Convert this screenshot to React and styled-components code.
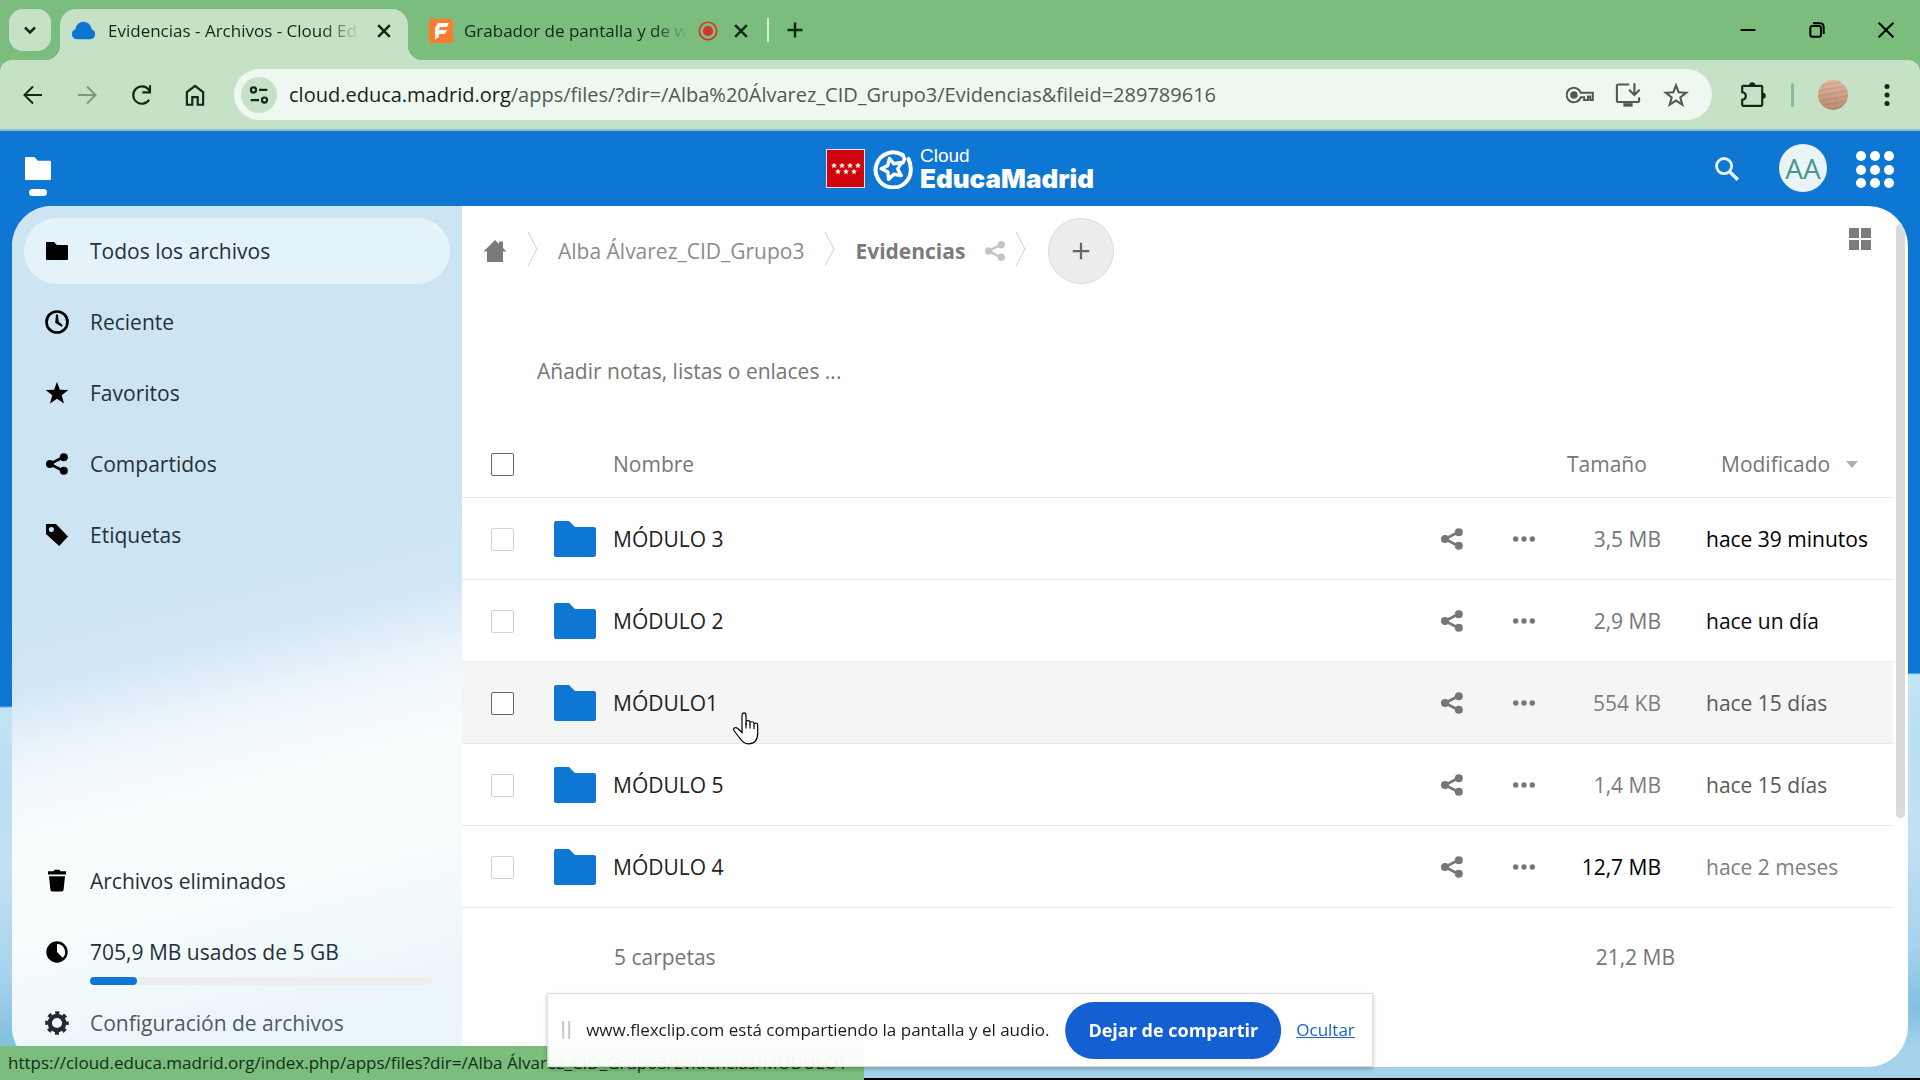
import React, { useState } from "react";
import styled, { createGlobalStyle, css } from "styled-components";

const GlobalStyle = createGlobalStyle`
  *, *::before, *::after {
    box-sizing: border-box;
  }

  body {
    margin: 0;
    color: #222;
    font-family: "Open Sans", "Noto Sans", sans-serif;
    font-size: 21px;
    line-height: 28px;
  }

  button {
    padding: 0;
    border: 0;
    background: none;
    color: inherit;
    font: inherit;
    cursor: pointer;
  }

  a {
    color: inherit;
    text-decoration: none;
  }

  svg {
    display: block;
    flex: none;
  }
`;

const Screen = styled.div`
  display: flex;
  flex-direction: column;
  min-height: 100vh;
  overflow: hidden;
`;

/* ---------- browser ---------- */

const TabStrip = styled.div`
  display: flex;
  align-items: flex-end;
  height: 60px;
  padding-left: 9px;
  background: #7abd7c;
  color: #12281a;
`;

const TabSearch = styled.button`
  display: grid;
  place-items: center;
  width: 42px;
  height: 42px;
  margin: 0 9px 9px 0;
  border-radius: 14px;
  background: #c5e2c6;
`;

const Tab = styled.div`
  position: relative;
  display: flex;
  align-items: center;
  gap: 12px;
  width: 348px;
  height: 51px;
  padding: 0 12px 8px 11px;
  border-radius: 16px 16px 0 0;

  ${(props) =>
    props.$active
      ? css`
          background: #c5e2c6;

          &::before,
          &::after {
            content: "";
            position: absolute;
            bottom: 0;
            width: 14px;
            height: 14px;
          }
          &::before {
            right: 100%;
            background: radial-gradient(circle at 0 0, transparent 14px, #c5e2c6 14px);
          }
          &::after {
            left: 100%;
            background: radial-gradient(circle at 100% 0, transparent 14px, #c5e2c6 14px);
          }
        `
      : css`
          gap: 11px;
          width: 345px;
          padding: 0 0 8px 21px;
        `}
`;

const TabTitle = styled.span`
  flex: 1;
  min-width: 0;
  overflow: hidden;
  white-space: nowrap;
  font-size: 17px;
  line-height: 24px;
  mask-image: linear-gradient(to right, #000 85%, transparent);
`;

const TabButton = styled.button`
  display: grid;
  place-items: center;
  width: 24px;
  height: 24px;
`;

const TabDivider = styled.span`
  width: 2px;
  height: 24px;
  margin: 0 14px 18px;
  background: #d3ecd2;
`;

const NewTab = styled(TabButton)`
  margin-bottom: 18px;
`;

const WindowControls = styled.div`
  display: flex;
  align-self: center;
  margin-left: auto;
`;

const WindowButton = styled.button`
  display: grid;
  place-items: center;
  width: 69px;
  height: 60px;
  color: #000;
`;

const Toolbar = styled.div`
  display: flex;
  align-items: center;
  height: 71px;
  padding: 0 30px 0 18px;
  border-bottom: 2px solid #8dc0cc;
  border-radius: 12px 12px 0 0;
  background: #c5e2c6;
  color: #12281a;
`;

const ToolbarWrap = styled.div`
  background: #7abd7c;
`;

const NavButton = styled.button`
  display: grid;
  place-items: center;
  width: 30px;
  height: 30px;
  margin-right: 24px;
  opacity: ${(props) => (props.disabled ? 0.4 : 1)};
`;

const AddressBar = styled.div`
  display: flex;
  flex: 1;
  align-items: center;
  height: 51px;
  min-width: 0;
  padding: 0 22px 0 7px;
  border-radius: 26px;
  background: #eef8f0;
  color: #4d5c52;
`;

const SiteInfo = styled.button`
  display: grid;
  flex: none;
  place-items: center;
  width: 36px;
  height: 36px;
  margin-right: 12px;
  border-radius: 50%;
  background: #c5e2c6;
  color: #12281a;
`;

const Url = styled.div`
  flex: 1;
  overflow: hidden;
  white-space: nowrap;
  font-size: 20px;

  b {
    color: #16241b;
    font-weight: 400;
  }
`;

const AddressActions = styled.div`
  display: flex;
  gap: 20px;
`;

const IconButton = styled.button`
  display: grid;
  place-items: center;
  width: 28px;
  height: 28px;
`;

const ToolbarEnd = styled.div`
  display: flex;
  align-items: center;
  margin-left: 27px;
`;

const ToolbarDivider = styled.span`
  width: 3px;
  height: 24px;
  margin: 0 24px;
  border-radius: 2px;
  background: #84c287;
`;

const ProfilePhoto = styled.button`
  width: 30px;
  height: 30px;
  margin-right: 36px;
  border-radius: 50%;
  background:
    repeating-linear-gradient(170deg, rgba(120, 70, 50, 0.15) 0 1px, transparent 2px 5px),
    linear-gradient(#e0b8a0, #b98a70);
`;

const LinkPreview = styled.div`
  position: fixed;
  bottom: 0;
  left: 0;
  width: 45vw;
  height: 34px;
  padding: 3px 8px;
  background: #7abd7c;
  color: #10301a;
  font-size: 17px;
  white-space: nowrap;
  overflow: hidden;
`;

const ShareNotice = styled.div`
  position: fixed;
  bottom: 13px;
  left: 50%;
  display: flex;
  align-items: center;
  height: 74px;
  padding: 0 17px 0 14px;
  border: 1px solid #dcdcdc;
  background: linear-gradient(#fff 60%, rgba(255, 255, 255, 0.94));
  box-shadow: 0 2px 4px rgba(0, 0, 0, 0.25);
  color: #1c1c1c;
  font-size: 17px;
  white-space: nowrap;
  transform: translateX(-50%);
`;

const Grip = styled.span`
  width: 8px;
  height: 18px;
  margin-right: 16px;
  border: solid #c8c8c8;
  border-width: 0 2px;
`;

const StopSharing = styled.button`
  height: 57px;
  margin: 0 15px 0 16px;
  padding: 0 23px;
  border-radius: 29px;
  background: #145fd1;
  color: #fff;
  font-size: 18px;
  font-weight: 700;
`;

const HideLink = styled.a`
  color: #1a62c6;
  text-decoration: underline;
`;

/* ---------- cloud app ---------- */

const Cloud = styled.div`
  display: flex;
  flex: 1;
  flex-direction: column;
  padding: 0 12px 11px;
  border-bottom: 2px solid #000;
  background:
    linear-gradient(
      179deg,
      transparent 0 575px,
      #c2e5f5 577px,
      #b9dff1 640px,
      #c3e0f4 740px,
      #a5d2ec 850px,
      #82c0e1 910px,
      #a4d3eb 950px
    ),
    #0e76d3;
`;

const Header = styled.header`
  display: grid;
  grid-template-columns: 1fr auto 1fr;
  align-items: center;
  height: 75px;
  color: #fff;
`;

const AppLink = styled.a`
  display: flex;
  flex-direction: column;
  align-items: center;
  gap: 9px;
  width: 26px;
  margin: 16px 0 0 13px;

  &::after {
    content: "";
    width: 18px;
    height: 7px;
    border-radius: 4px;
    background: #fff;
  }
`;

const Brand = styled.a`
  display: flex;
  align-items: center;
  gap: 6px;
`;

const BrandName = styled.span`
  display: flex;
  flex-direction: column;
  font-family: "Liberation Sans", Arial, sans-serif;
  font-size: 19px;
  line-height: 20px;

  strong {
    font-family: Inter, "Liberation Sans", sans-serif;
    font-size: 26px;
    font-weight: 900;
    line-height: 26px;
  }
`;

const HeaderEnd = styled.div`
  display: flex;
  align-items: center;
  justify-content: flex-end;
  padding-right: 14px;
`;

const Avatar = styled.button`
  width: 48px;
  height: 48px;
  margin: 0 29px 2px 38px;
  border-radius: 50%;
  background: #e9f4f8;
  color: #4b958d;
  font-size: 28px;
`;

const Panel = styled.div`
  position: relative;
  display: grid;
  flex: 1;
  grid-template-columns: 450px minmax(0, 1fr);
  overflow: hidden;
  border-radius: 40px;
  background: #fff;
`;

const Sidebar = styled.nav`
  display: flex;
  flex-direction: column;
  gap: 5px;
  padding: 12px 12px 11px;
  background: linear-gradient(
    166deg,
    #cde5f2 0,
    #cde5f3 400px,
    #d2e6f6 470px,
    #eef6fb 545px,
    #f8fcfd 620px,
    #f7fcfd 720px,
    #ecf6fa 840px,
    #e8f4f9 100%
  );
`;

const SideItem = styled.a`
  display: flex;
  align-items: center;
  gap: 21px;
  height: 66px;
  padding-left: 21px;
  border-radius: 33px;
  background: ${(props) => (props.$active ? "#e4f2fa" : "none")};
  color: ${(props) => (props.$muted ? "#4f595f" : "#25313a")};

  svg {
    color: ${(props) => (props.$muted ? "#222b30" : "#000")};
  }
`;

const SideSpacer = styled.div`
  flex: 1;
`;

const Quota = styled.div`
  position: relative;
`;

const QuotaBar = styled.div`
  position: absolute;
  right: 18px;
  bottom: 0;
  left: 66px;
  height: 8px;
  border-radius: 4px;
  background: #ededed;
`;

const QuotaFill = styled.div`
  height: 100%;
  border-radius: 4px;
  background: #0e76d3;
`;

const Files = styled.main`
  padding: 12px 15px 0 0;
  color: #767676;
`;

const Controls = styled.div`
  display: flex;
  align-items: center;
  height: 66px;
  padding: 0 19px 0 21px;
`;

const Crumb = styled.a`
  display: flex;
  align-items: center;
  gap: 19px;
  color: ${(props) => (props.$current ? "#7b7b7b" : "#8c8c8c")};
  font-weight: ${(props) => (props.$current ? 700 : 400)};
`;

const CrumbArrow = styled.svg`
  margin: 0 ${(props) => props.$after || 20}px 4px ${(props) => props.$before || 20}px;
`;

const AddButton = styled.button`
  display: grid;
  place-items: center;
  width: 66px;
  height: 66px;
  border: 1px solid #dbdbdb;
  border-radius: 50%;
  background: #ededed;
  color: #666;
`;

const GridToggle = styled(IconButton)`
  margin: 0 0 24px auto;
`;

const Notes = styled.p`
  margin: 73px 75px 45px;
`;

const FileTable = styled.table`
  width: 100%;
  border-collapse: collapse;
  table-layout: fixed;

  th,
  td {
    height: 82px;
    padding: 2px 0 0;
    border-bottom: 1px solid #e9e9e9;
    font-weight: 400;
    text-align: left;
  }
  th {
    height: 67px;
  }
  tfoot td {
    height: 98px;
    border: 0;
  }
`;

const FileRow = styled.tr`
  background: ${(props) => (props.$hovered ? "#f5f5f5" : "none")};
`;

const Checkbox = styled.input`
  display: block;
  width: 23px;
  height: 23px;
  margin: 0 0 0 29px;
  appearance: none;
  border: 1px solid ${(props) => (props.$strong ? "#666" : "#d2d2d2")};
  border-radius: 2px;
  background: #fff;
`;

const FileLink = styled.a`
  position: relative;
  display: flex;
  align-items: center;
  gap: 17px;
  width: fit-content;
  color: #222;
`;

const RowAction = styled.button`
  display: block;
  margin-left: 28px;
`;

const Pointer = styled.svg`
  position: absolute;
  top: 27px;
  left: 179px;
`;

const Size = styled.td`
  && {
    padding-right: ${(props) => (props.$total ? 0 : 14)}px;
    color: ${(props) => props.$tone || "#767676"};
    text-align: right;
  }
`;

const Modified = styled.td`
  && {
    padding-left: 31px;
    color: ${(props) => props.$tone};
    white-space: nowrap;
  }
`;

const SortButton = styled.button`
  display: flex;
  align-items: center;
  gap: 16px;
  margin-left: ${(props) => props.$indent}px;
`;

const ScrollThumb = styled.div`
  position: absolute;
  top: 18px;
  right: 3px;
  width: 9px;
  height: 69%;
  border-radius: 5px;
  background: #dadada;
`;

/* ---------- icons ---------- */

const Icon = ({ size = 24, children, ...rest }) => (
  <svg width={size} height={size} viewBox="0 0 24 24" fill="currentColor" aria-hidden="true" {...rest}>
    {children}
  </svg>
);

const Line = ({ width = 2, ...rest }) => (
  <Icon fill="none" stroke="currentColor" strokeWidth={width} {...rest} />
);

const CloseIcon = ({ size = 20 }) => (
  <Line size={size} width={3}>
    <path d="M5 5l14 14M19 5L5 19" />
  </Line>
);

const FolderIcon = ({ width = 22, height = 18, color = "currentColor" }) => (
  <svg width={width} height={height} viewBox="0 0 42 36" preserveAspectRatio="none" fill={color} aria-hidden="true">
    <path d="M2 0h13l6 6h19a2 2 0 0 1 2 2v26a2 2 0 0 1-2 2H2a2 2 0 0 1-2-2V2a2 2 0 0 1 2-2z" />
  </svg>
);

const ShareIcon = ({ size = 24, ...rest }) => (
  <Icon size={size} {...rest}>
    <path d="M18.5 5L5 12l13.500 7" fill="none" stroke="currentColor" strokeWidth="2.600" />
    <circle cx="18.800" cy="5.200" r="4" />
    <circle cx="5" cy="12" r="4" />
    <circle cx="18.800" cy="18.800" r="4" />
  </Icon>
);

const DotsIcon = () => (
  <Icon>
    <circle cx="3.700" cy="12" r="2.700" />
    <circle cx="12" cy="12" r="2.700" />
    <circle cx="20.300" cy="12" r="2.700" />
  </Icon>
);

const ClockIcon = () => (
  <Icon>
    <circle cx="12" cy="12" r="10.500" fill="none" stroke="currentColor" strokeWidth="2.700" />
    <path d="M11 4.500h2l.7 7 4 3.700-1.200 1.600-6.300-4z" />
  </Icon>
);

const StarIcon = () => (
  <Icon>
    <path d="M12 .8l2.900 7.900 8.400.3-6.600 5.200 2.300 8.200-7-4.700-7 4.700 2.300-8.200L.7 9l8.400-.3z" />
  </Icon>
);

const TagIcon = () => (
  <Icon>
    <path fillRule="evenodd" d="M1 1h10l12 12.500-8.800 9.500L1 11zM6.400 4a2.500 2.500 0 1 0 0 5 2.500 2.500 0 0 0 0-5z" />
  </Icon>
);

const TrashIcon = () => (
  <Icon>
    <path d="M9.500.8h5l1 1.500h5.500v3.200H3V2.300h5.500zM4 7.200h16l-1.400 13.500a2 2 0 0 1-2 1.800H7.400a2 2 0 0 1-2-1.800z" />
  </Icon>
);

const QuotaIcon = () => (
  <Icon>
    <path fillRule="evenodd" d="M12 1.300a10.700 10.700 0 1 0 0 21.400 10.700 10.700 0 0 0 0-21.400zM12 4a8 8 0 0 1 5.700 13.700L12 12z" />
  </Icon>
);

const GearIcon = () => (
  <Line>
    <circle cx="12" cy="12" r="7.200" strokeWidth="4.200" />
    <circle cx="12" cy="12" r="10" strokeWidth="3.600" strokeDasharray="4 3.854" strokeDashoffset="2" />
  </Line>
);

const PolygonStar = ({ x, y }) => (
  <path
    transform={`translate(${x} ${y})`}
    d="M0-3l.8 2.100 2.200.1-1.700 1.400.6 2.200L0 1.600l-1.900 1.200.6-2.200L-3-.8l2.200-.1z"
    fill="#fff"
  />
);

const MadridFlag = () => (
  <svg width="39" height="39" viewBox="0 0 39 39" aria-hidden="true">
    <rect x=".5" y=".5" width="38" height="38" fill="#d0040c" stroke="#f4dfe4" />
    {[8, 16, 24, 32].map((x) => (
      <PolygonStar key={x} x={x} y={16.5} />
    ))}
    {[12, 20, 28].map((x) => (
      <PolygonStar key={x} x={x} y={22.5} />
    ))}
  </svg>
);

// open ring whose end curls into the star
const EducaLogo = () => (
  <svg width="43" height="40" viewBox="0 0 43 40" fill="none" stroke="#fff" aria-hidden="true">
    <path
      d="M31.500 6A17.600 17.600 0 1 0 39.800 20.500c0-4-.8-7.500-2.300-10.500"
      strokeWidth="4"
      strokeLinecap="round"
    />
    <path d="M31.500 6c2.300 2.500 2.200 5.500.2 8" strokeWidth="3.400" strokeLinecap="round" />
    <path
      d="M18.500 9.500l4.300 5.300 7.700-1.300-3.800 6.500 3.600 6.500-7.400-1.200-5.200 5-.9-7.300-6.600-3.200 6.500-3.200z"
      strokeWidth="3.400"
      strokeLinejoin="round"
    />
  </svg>
);

const HandPointer = () => (
  <Pointer width="26" height="33" viewBox="0 0 26 33" fill="#fff" stroke="#000" strokeWidth="1.200" aria-hidden="true">
    <path d="M9 18.500V3.200C9 .2 13 .2 13 3.200v10-3c0-2.200 4-2.200 4 0v2.500-1.500c0-2 4-2 4 .3v2-1c0-1.800 3.700-1.800 3.700.5v8c0 7-3.500 10.800-9.200 10.800-4.500 0-6.500-2.300-8.500-5.300L1.300 19c-1.800-2.800.8-4.300 3.200-2.700L9 20.500z" />
    <path d="M13 11v5.500M17 12v4.500M21 13v4" />
  </Pointer>
);

const CrumbSeparator = (props) => (
  <CrumbArrow width="11" height="36" viewBox="0 0 11 36" fill="none" stroke="#cfcfcf" aria-hidden="true" {...props}>
    <path d="M1 1l9 17L1 35" />
  </CrumbArrow>
);

/* ---------- data ---------- */

const sections = [
  { name: "Todos los archivos", icon: <Icon><path d="M1 3h8l3 3h10a1 1 0 0 1 1 1v13a1 1 0 0 1-1 1H2a1 1 0 0 1-1-1z" /></Icon> },
  { name: "Reciente", icon: <ClockIcon /> },
  { name: "Favoritos", icon: <StarIcon /> },
  { name: "Compartidos", icon: <ShareIcon /> },
  { name: "Etiquetas", icon: <TagIcon /> },
];

const folders = [
  { name: "MÓDULO 3", size: "3,5 MB", sizeTone: "#767676", date: "hace 39 minutos", dateTone: "#000" },
  { name: "MÓDULO 2", size: "2,9 MB", sizeTone: "#767676", date: "hace un día", dateTone: "#0a0a0a" },
  { name: "MÓDULO1", size: "554 KB", sizeTone: "#808080", date: "hace 15 días", dateTone: "#595959", hovered: true },
  { name: "MÓDULO 5", size: "1,4 MB", sizeTone: "#7c7c7c", date: "hace 15 días", dateTone: "#595959" },
  { name: "MÓDULO 4", size: "12,7 MB", sizeTone: "#000", date: "hace 2 meses", dateTone: "#808080" },
];

const BrowserChrome = () => (
  <>
    <TabStrip>
      <TabSearch aria-label="Buscar pestañas">
        <Line size={20} width={3}>
          <path d="M6 9l6 6 6-6" />
        </Line>
      </TabSearch>
      <Tab $active>
        <Icon size={25} color="#0f75d4">
          <path d="M5.500 20.500a5 5 0 0 1-1.300-9.700C4.700 6.500 8 3.500 12 3.500s7.300 3 7.800 7.300a5 5 0 0 1-1.300 9.700z" />
        </Icon>
        <TabTitle>Evidencias - Archivos - Cloud Ed</TabTitle>
        <TabButton aria-label="Cerrar pestaña">
          <CloseIcon />
        </TabButton>
      </Tab>
      <Tab>
        <Icon size={24}>
          <rect width="24" height="24" rx="2" fill="#fb7c2c" />
          <path d="M9 4h11l-2 4h-7l-1.500 3H18l-2 4h-6v3l-4 2.500V9z" fill="#fff" />
        </Icon>
        <TabTitle>Grabador de pantalla y de w</TabTitle>
        <Icon size={20} color="#d8342c">
          <circle cx="12" cy="12" r="10.500" fill="none" stroke="currentColor" strokeWidth="2" />
          <circle cx="12" cy="12" r="6" />
        </Icon>
        <TabButton aria-label="Cerrar pestaña">
          <CloseIcon />
        </TabButton>
      </Tab>
      <TabDivider />
      <NewTab aria-label="Nueva pestaña">
        <Line size={20} width={3}>
          <path d="M12 3v18M3 12h18" />
        </Line>
      </NewTab>
      <WindowControls>
        <WindowButton aria-label="Minimizar">
          <Line size={16} width={3}>
            <path d="M1 12h22" />
          </Line>
        </WindowButton>
        <WindowButton aria-label="Restaurar">
          <Line size={16} width={3}>
            <rect x="2" y="6" width="16" height="16" rx="3" />
            <path d="M6 2h11a5 5 0 0 1 5 5v11" />
          </Line>
        </WindowButton>
        <WindowButton aria-label="Cerrar">
          <Line size={16} width={3}>
            <path d="M1 1l22 22M23 1L1 23" />
          </Line>
        </WindowButton>
      </WindowControls>
    </TabStrip>
    <ToolbarWrap>
      <Toolbar>
        <NavButton aria-label="Atrás">
          <Line size={24}>
            <path d="M21 12H4M12 3.500L3.500 12l8.500 8.500" />
          </Line>
        </NavButton>
        <NavButton aria-label="Adelante" disabled>
          <Line size={24}>
            <path d="M3 12h17M12 3.500l8.500 8.500-8.500 8.500" />
          </Line>
        </NavButton>
        <NavButton aria-label="Volver a cargar">
          <Line size={26}>
            <path d="M19.500 16.500a8 8 0 1 1-.4-9.400l1 1.400" />
            <path d="M20.300 3v6.500h-7" />
          </Line>
        </NavButton>
        <NavButton aria-label="Inicio">
          <Line size={26}>
            <path d="M4.500 21V9.300L12 3.500l7.500 5.800V21h-5v-7h-5v7z" />
          </Line>
        </NavButton>
        <AddressBar>
          <SiteInfo aria-label="Información del sitio">
            <Line size={22} width={2.4}>
              <circle cx="6" cy="6.500" r="2.800" />
              <path d="M12 6.500h9M3 17.500h9" />
              <circle cx="18" cy="17.500" r="2.800" />
            </Line>
          </SiteInfo>
          <Url>
            <b>cloud.educa.madrid.org</b>/apps/files/?dir=/Alba%20Álvarez_CID_Grupo3/Evidencias&amp;fileid=289789616
          </Url>
          <AddressActions>
            <IconButton aria-label="Contraseñas">
              <Line size={28} width={1.7}>
                <path d="M12.600 10H23v6.200h-2.200v-3h-2v3h-3.300V14h-2.900a6.200 6.200 0 1 1 0-4z" />
                <circle cx="6.800" cy="12" r="2.400" fill="currentColor" />
              </Line>
            </IconButton>
            <IconButton aria-label="Instalar aplicación">
              <Line size={28} width={1.8}>
                <path d="M13 3H3.500a1 1 0 0 0-1 1v13a1 1 0 0 0 1 1h17a1 1 0 0 0 1-1v-3" />
                <path d="M8 20.500h8" strokeWidth="3" />
                <path d="M17.500 2v9.500M13 7.500l4.500 4.500L22 7.500" />
              </Line>
            </IconButton>
            <IconButton aria-label="Añadir a marcadores">
              <Line size={28} width={1.8}>
                <path d="M12 3.700l2.300 6 6.400.4-5 4 1.700 6.200-5.400-3.500-5.400 3.500 1.700-6.200-5-4 6.400-.4z" />
              </Line>
            </IconButton>
          </AddressActions>
        </AddressBar>
        <ToolbarEnd>
          <IconButton aria-label="Extensiones">
            <Line size={26} width={2}>
              <path d="M3 3.500h16.500a1 1 0 0 1 1 1V21a1 1 0 0 1-1 1H3a1 1 0 0 1-1-1v-4.500c4.500-.5 4.500-6.500 0-7V4.500a1 1 0 0 1 1-1z" />
              <path d="M8.500 3a2.800 2.800 0 0 1 5.600 0zM21 10a2.800 2.800 0 0 1 0 5.600z" fill="currentColor" stroke="none" />
            </Line>
          </IconButton>
          <ToolbarDivider />
          <ProfilePhoto aria-label="Perfil" />
          <svg width="6" height="24" viewBox="0 0 6 24" fill="currentColor" aria-hidden="true">
            <circle cx="3" cy="3.500" r="2.500" />
            <circle cx="3" cy="12" r="2.500" />
            <circle cx="3" cy="20.500" r="2.500" />
          </svg>
        </ToolbarEnd>
      </Toolbar>
    </ToolbarWrap>
  </>
);

const CloudHeader = () => (
  <Header>
    <AppLink href="#archivos" aria-label="Archivos">
      <FolderIcon width={26} height={23} />
    </AppLink>
    <Brand href="#inicio">
      <MadridFlag />
      <EducaLogo />
      <BrandName>
        Cloud
        <strong>EducaMadrid</strong>
      </BrandName>
    </Brand>
    <HeaderEnd>
      <IconButton aria-label="Buscar">
        <Line size={28} width={2.4} color="#e3f3ff">
          <circle cx="9.500" cy="9.500" r="6.500" />
          <path d="M14.300 14.300l7 7" strokeWidth="3" />
        </Line>
      </IconButton>
      <Avatar aria-label="Cuenta de AA">AA</Avatar>
      <button aria-label="Aplicaciones">
        <svg width="38" height="38" viewBox="0 0 38 38" fill="#fff" aria-hidden="true">
          {[6, 20, 33].map((y) => [5, 19, 33].map((x) => <circle key={`${x}-${y}`} cx={x} cy={y} r="5" />))}
        </svg>
      </button>
    </HeaderEnd>
  </Header>
);

const CloudSidebar = () => (
  <Sidebar>
    {sections.map((section, index) => (
      <SideItem href="#seccion" key={section.name} $active={index === 0}>
        {section.icon}
        {section.name}
      </SideItem>
    ))}
    <SideSpacer />
    <SideItem href="#papelera">
      <TrashIcon />
      Archivos eliminados
    </SideItem>
    <Quota>
      <SideItem href="#cuota">
        <QuotaIcon />
        705,9 MB usados de 5 GB
      </SideItem>
      <QuotaBar>
        <QuotaFill style={{ width: `${(705.9 / 5120) * 100}%` }} />
      </QuotaBar>
    </Quota>
    <SideItem href="#configuracion" $muted>
      <GearIcon />
      Configuración de archivos
    </SideItem>
  </Sidebar>
);

const FileList = () => {
  const [selected, setSelected] = useState([]);

  const toggle = (name) => {
    setSelected(
      selected.includes(name) ? selected.filter((item) => item !== name) : [...selected, name]
    );
  };

  return (
    <FileTable>
      <colgroup>
        <col style={{ width: 92 }} />
        <col />
        <col style={{ width: 72 }} />
        <col style={{ width: 72 }} />
        <col style={{ width: 119 }} />
        <col style={{ width: 218 }} />
      </colgroup>
      <thead>
        <tr>
          <th>
            <Checkbox type="checkbox" $strong aria-label="Seleccionar todo" />
          </th>
          <th>
            <SortButton $indent={59}>Nombre</SortButton>
          </th>
          <th />
          <th />
          <th>
            <SortButton $indent={11}>Tamaño</SortButton>
          </th>
          <th>
            <SortButton $indent={46}>
              Modificado
              <svg width="12" height="7" viewBox="0 0 12 7" fill="#b0b0b0" aria-hidden="true">
                <path d="M0 0h12L6 7z" />
              </svg>
            </SortButton>
          </th>
        </tr>
      </thead>
      <tbody>
        {folders.map((folder) => (
          <FileRow key={folder.name} $hovered={folder.hovered}>
            <td>
              <Checkbox
                type="checkbox"
                $strong={folder.hovered}
                checked={selected.includes(folder.name)}
                onChange={() => toggle(folder.name)}
                aria-label={`Seleccionar ${folder.name}`}
              />
            </td>
            <td>
              <FileLink href="#carpeta">
                <FolderIcon width={42} height={36} color="#0e76d3" />
                {folder.name}
                {folder.hovered && <HandPointer />}
              </FileLink>
            </td>
            <td>
              <RowAction aria-label="Compartir">
                <ShareIcon />
              </RowAction>
            </td>
            <td>
              <RowAction aria-label="Acciones">
                <DotsIcon />
              </RowAction>
            </td>
            <Size $tone={folder.sizeTone}>{folder.size}</Size>
            <Modified $tone={folder.dateTone}>{folder.date}</Modified>
          </FileRow>
        ))}
      </tbody>
      <tfoot>
        <tr>
          <td />
          <td>
            <SortButton as="span" $indent={60}>5 carpetas</SortButton>
          </td>
          <td />
          <td />
          <Size $total>21,2 MB</Size>
          <td />
        </tr>
      </tfoot>
    </FileTable>
  );
};

const App = () => (
  <Screen>
    <GlobalStyle />
    <BrowserChrome />
    <Cloud>
      <CloudHeader />
      <Panel>
        <CloudSidebar />
        <Files>
          <Controls>
            <Crumb href="#inicio" aria-label="Inicio">
              <Icon color="#7a7a7a">
                <path d="M12 1l4 4V2.500h4V9l3.500 3.500H20V23H4V12.500H.5z" />
              </Icon>
            </Crumb>
            <CrumbSeparator />
            <Crumb href="#grupo">Alba Álvarez_CID_Grupo3</Crumb>
            <CrumbSeparator />
            <Crumb href="#evidencias" $current>
              Evidencias
              <ShareIcon size={22} color="#c4c4c4" />
            </Crumb>
            <CrumbSeparator $before={9} $after={22} />
            <AddButton aria-label="Nuevo">
              <Line size={18} width={3}>
                <path d="M12 1v22M1 12h22" />
              </Line>
            </AddButton>
            <GridToggle aria-label="Vista de cuadrícula">
              <Icon size={24} color="#7c7c7c">
                <path d="M1 1h10v10H1zM13 1h10v10H13zM1 13h10v10H1zM13 13h10v10H13z" />
              </Icon>
            </GridToggle>
          </Controls>
          <Notes>Añadir notas, listas o enlaces ...</Notes>
          <FileList />
        </Files>
        <ScrollThumb />
      </Panel>
    </Cloud>
    <LinkPreview>
      https://cloud.educa.madrid.org/index.php/apps/files?dir=/Alba Álvarez_CID_Grupo3/Evidencias/MÓDULO1
    </LinkPreview>
    <ShareNotice>
      <Grip />
      www.flexclip.com está compartiendo la pantalla y el audio.
      <StopSharing>Dejar de compartir</StopSharing>
      <HideLink href="#ocultar">Ocultar</HideLink>
    </ShareNotice>
  </Screen>
);

export default App;
